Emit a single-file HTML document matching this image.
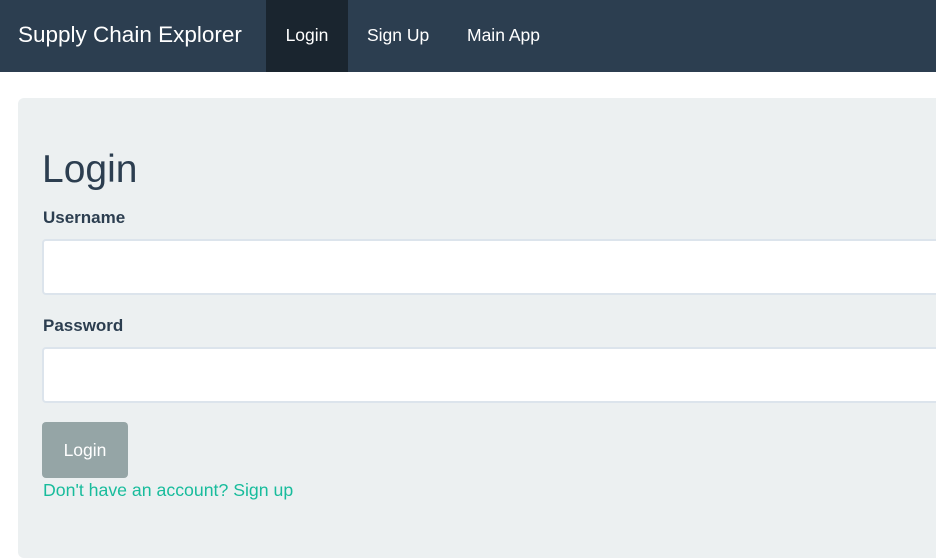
<!DOCTYPE html>
<html><head><style>
*{margin:0;padding:0;box-sizing:border-box}
body{width:936px;height:522px;overflow:hidden;background:#fff;font-family:"Liberation Sans",sans-serif;color:#2c3e50;position:relative}
.nav{position:absolute;left:0;top:0;width:936px;height:72px;background:#2c3e50}
.nav span{position:absolute;color:#fff;top:0;height:72px;line-height:70px;white-space:nowrap}
.brand{left:18px;font-size:22.5px}
.item{font-size:17.5px}
.active{background:#1a252f;left:266px;width:82px;text-align:center}
.jumbo{position:absolute;left:18px;top:98px;width:940px;height:460px;background:#ecf0f1;border-radius:6px}
.abs{position:absolute;white-space:nowrap}
h1{font-weight:normal;font-size:39px;left:42px;top:148px}
.lbl{font-weight:bold;font-size:17px;left:43px}
.inp{position:absolute;left:42px;width:920px;height:56px;background:#fff;border:2px solid #dce4ec;border-radius:4px}
.btn{position:absolute;left:42px;top:422px;width:86px;height:56px;background:#95a5a6;border-radius:4px;color:#fff;font-size:17.5px;text-align:center;line-height:56px}
.link{left:43px;top:480px;font-size:17.7px;color:#18bc9c}
</style></head><body>
<div class="nav">
<span class="brand">Supply Chain Explorer</span>
<span class="item active">Login</span>
<span class="item" style="left:367px">Sign Up</span>
<span class="item" style="left:467px">Main App</span>
</div>
<div class="jumbo"></div>
<h1 class="abs">Login</h1>
<div class="abs lbl" style="top:208px">Username</div>
<div class="inp" style="top:239px"></div>
<div class="abs lbl" style="top:316px">Password</div>
<div class="inp" style="top:347px"></div>
<div class="btn">Login</div>
<div class="abs link">Don't have an account? Sign up</div>
</body></html>
